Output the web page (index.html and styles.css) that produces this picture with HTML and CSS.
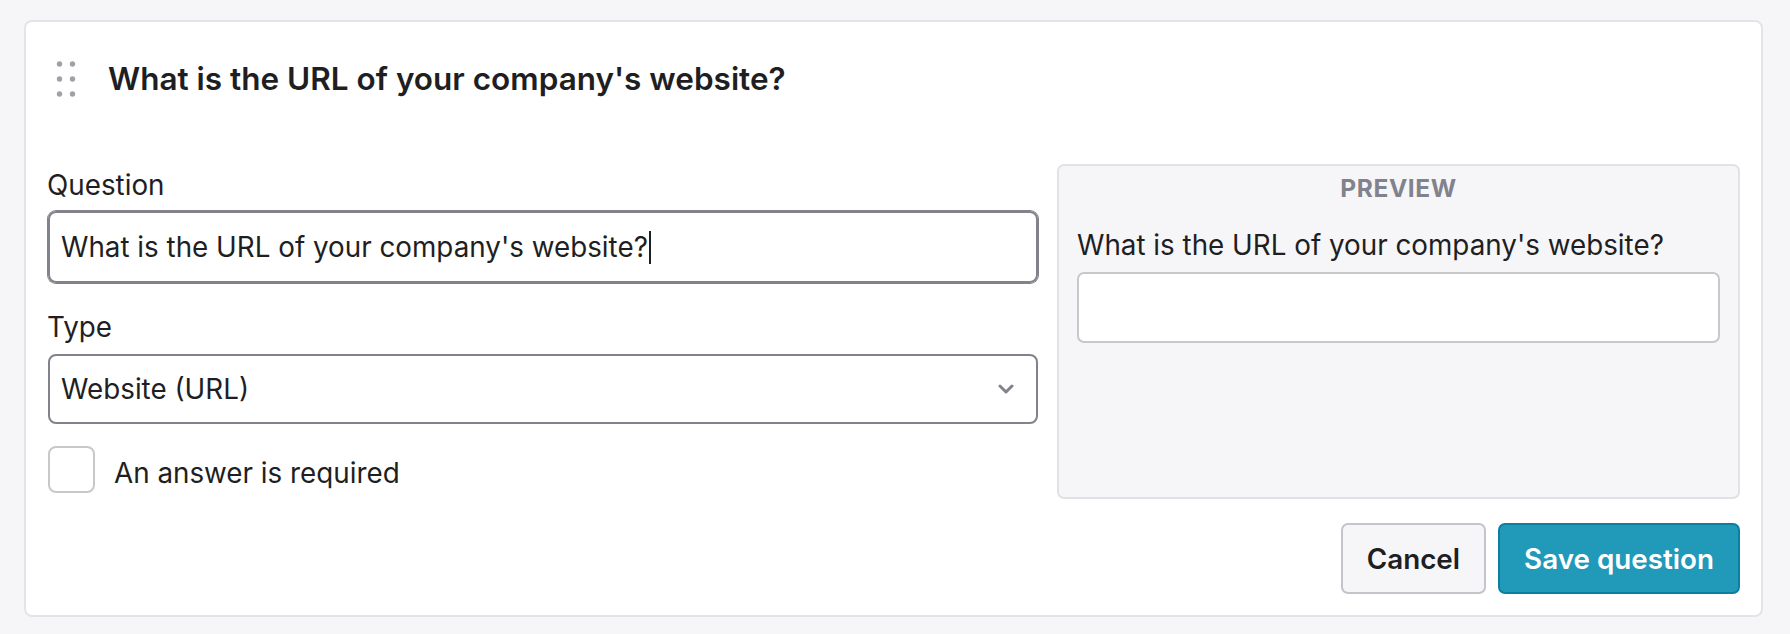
FILE: index.html
```html
<!DOCTYPE html>
<html lang="en">
<head>
<meta charset="utf-8">
<title>Edit question</title>
<link rel="stylesheet" href="styles.css">
</head>
<body>
<div class="card">
  <div class="card-header">
    <svg class="grip" width="24" height="42" viewBox="0 0 24 42" aria-hidden="true">
      <circle cx="5.5" cy="6" r="2.7"/>
      <circle cx="18.5" cy="6" r="2.7"/>
      <circle cx="5.5" cy="21" r="2.7"/>
      <circle cx="18.5" cy="21" r="2.7"/>
      <circle cx="5.5" cy="36" r="2.7"/>
      <circle cx="18.5" cy="36" r="2.7"/>
    </svg>
    <h2 class="card-title">What is the URL of your company's website?</h2>
  </div>
  <div class="editor">
    <div class="form">
      <label class="field-label" for="q">Question</label>
      <div class="text-input focused"><span id="q">What is the URL of your company's website?</span><span class="caret"></span></div>
      <label class="field-label type-label">Type</label>
      <div class="select">
        <span>Website (URL)</span>
        <svg class="chevron" width="16" height="10" viewBox="0 0 16 10" aria-hidden="true">
          <path d="M2 2 L8 8 L14 2" fill="none" stroke="#82828c" stroke-width="3" stroke-linecap="round" stroke-linejoin="round"/>
        </svg>
      </div>
      <div class="check-row">
        <span class="checkbox"></span>
        <span class="check-label">An answer is required</span>
      </div>
    </div>
    <div class="preview">
      <div class="preview-title">PREVIEW</div>
      <div class="preview-question">What is the URL of your company's website?</div>
      <div class="preview-input"></div>
    </div>
  </div>
  <div class="actions">
    <button class="btn btn-secondary">Cancel</button>
    <button class="btn btn-primary">Save question</button>
  </div>
</div>
</body>
</html>
```
FILE: styles.css
```css
* { box-sizing: border-box; }

body {
  margin: 0;
  background: #f6f6f8;
  font-family: Inter, "Noto Sans", "Liberation Sans", sans-serif;
  color: #1f1f23;
  font-size: 27.8px;
  line-height: 42px;
}

.card {
  margin: 20px 27px 0 24px;
  background: #ffffff;
  border: 2px solid #e4e4e8;
  border-radius: 8px;
  padding: 21px;
}

.card-header {
  display: flex;
  align-items: center;
  padding-top: 12px;
  margin-bottom: 62px;
}

.grip {
  fill: #a0a0a8;
  margin-left: 7px;
  flex: none;
}

.card-title {
  margin: 0 0 0 30px;
  font-size: 31.5px;
  line-height: 47px;
  font-weight: 600;
}

.editor {
  display: grid;
  grid-template-columns: minmax(0, 1fr) 683px;
  column-gap: 18px;
}

.form {
  display: flex;
  flex-direction: column;
  padding-bottom: 5px;
}

.field-label {
  display: block;
  margin-bottom: 4px;
}

.type-label {
  margin-top: 22px;
  margin-bottom: 6px;
}

.text-input {
  margin: 1px;
  height: 72px;
  border: 2px solid #82828c;
  box-shadow: 0 0 0 1px #82828c;
  border-radius: 8px;
  padding: 0 11px;
  display: flex;
  align-items: center;
  white-space: nowrap;
}

.caret {
  display: inline-block;
  width: 2px;
  height: 33px;
  background: #1f1f23;
  margin-left: 1px;
}

.select {
  margin: 0 1px;
  height: 70px;
  border: 2px solid #82828c;
  border-radius: 8px;
  padding: 0 22px 0 11px;
  display: flex;
  align-items: center;
  justify-content: space-between;
}

.check-row {
  display: flex;
  align-items: flex-start;
  margin-top: 22px;
  padding-left: 1px;
}

.checkbox {
  width: 47px;
  height: 47px;
  border: 2px solid #c8c8cc;
  border-radius: 8px;
  background: #fff;
  flex: none;
}

.check-label {
  margin-left: 19px;
  margin-top: 6px;
}

.preview {
  background: #f6f6f8;
  border: 2px solid #e2e2e6;
  border-radius: 7px;
  padding: 4px 18px 18px;
}

.preview-title {
  text-align: center;
  font-size: 24.5px;
  line-height: 36.75px;
  font-weight: 700;
  color: #82828c;
  letter-spacing: 0.6px;
}

.preview-question {
  margin-top: 17px;
}

.preview-input {
  margin-top: 6px;
  height: 71px;
  background: #fff;
  border: 2px solid #c8c8cc;
  border-radius: 7px;
}

.actions {
  display: flex;
  justify-content: flex-end;
  gap: 12px;
  margin-top: 24px;
}

.btn {
  font-family: inherit;
  font-size: 27.8px;
  font-weight: 600;
  height: 71px;
  padding: 0 24px;
  border-radius: 7px;
  border: 2px solid;
  cursor: pointer;
}

.btn-secondary {
  background: #f6f6f8;
  border-color: #c4c4ca;
  color: #1f1f23;
}

.btn-primary {
  background: #2199b8;
  border-color: #0d7f9e;
  color: #ffffff;
}
```
